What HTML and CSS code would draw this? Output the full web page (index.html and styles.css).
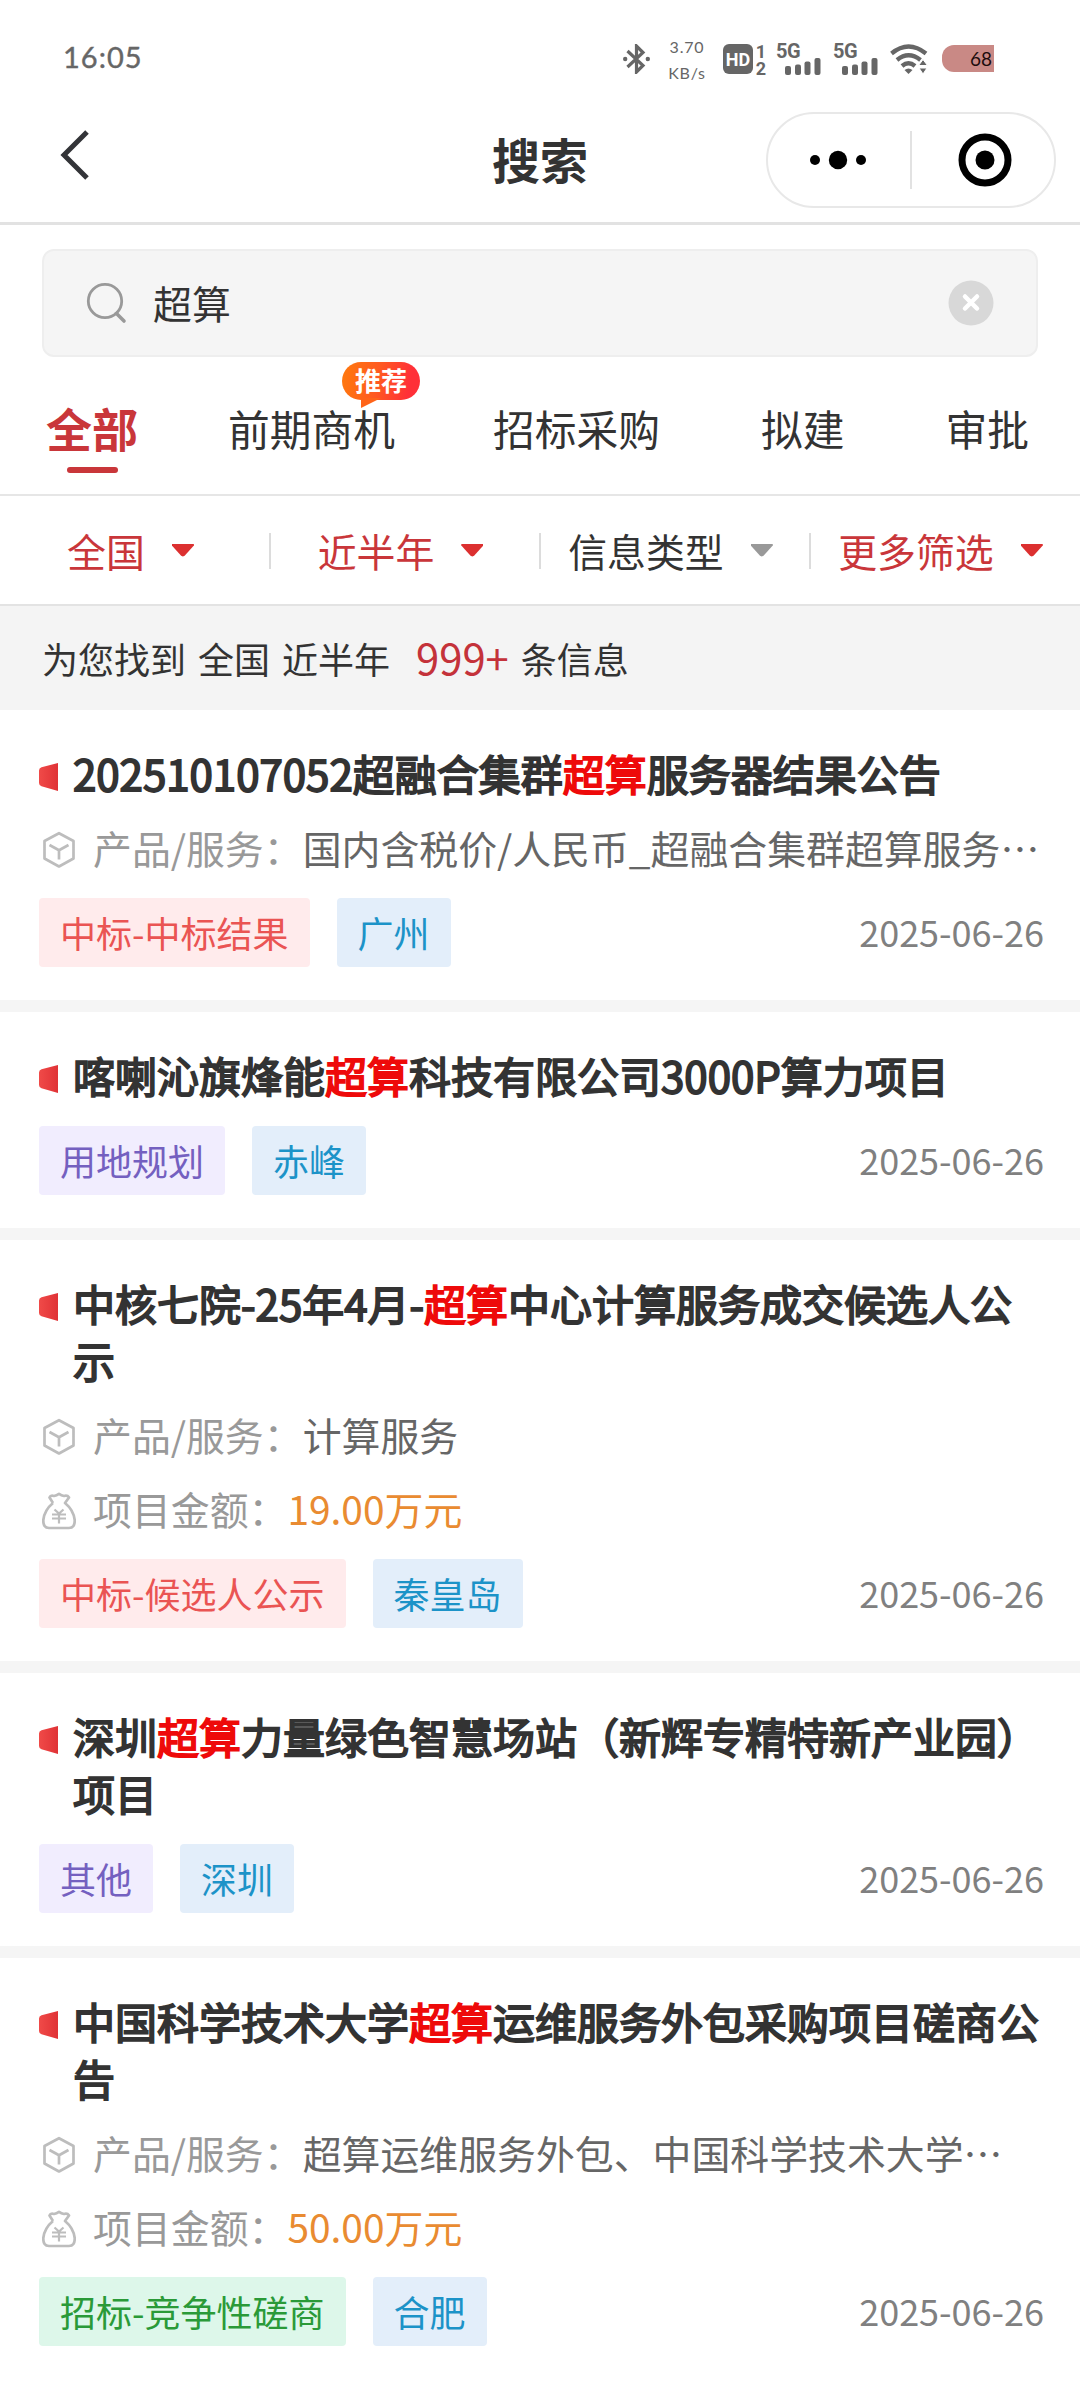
FILE: index.html
```html
<!DOCTYPE html>
<html lang="zh-CN">
<head>
    <meta charset="UTF-8">
    <meta name="viewport" content="width=device-width, initial-scale=1.0">
    <title>搜索</title>
    <link rel="stylesheet" href="styles.css">
</head>
<body>
    <!-- shared icons -->
    <svg class="sprite" width="0" height="0">
        <defs>
            <linearGradient id="markFill" x1="0" y1="0" x2="1" y2="0">
                <stop offset="0" stop-color="#f04a48"/>
                <stop offset="1" stop-color="#e03236"/>
            </linearGradient>
        </defs>
        <symbol id="mark" viewBox="0 0 19 28">
            <path d="M0 7.5Q0 5 2.5 4.300L19 0V28L2.500 23.200Q0 22.500 0 20Z" fill="url(#markFill)"/>
        </symbol>
        <symbol id="cube" viewBox="0 0 34 38">
            <path d="M17 2.200 31.500 10V27.500L17 35.500 2.500 27.500V10Z M7.500 14 17 19.300 26.500 14 M17 19.300V28.500" fill="none" stroke="#bdbdbd" stroke-width="2.700" stroke-linejoin="round"/>
        </symbol>
        <symbol id="bag" viewBox="0 0 34 38">
            <path d="M11 11 7.500 5.500Q8.500 3 12 4Q14.500 3.500 17 1.800Q19.500 3.500 22 4Q25.500 3 27 5.500L23 11Q31.500 18 32.700 28Q33 36 27 36H7Q1 36 1.300 28Q2.500 18 11 11" fill="none" stroke="#bdbdbd" stroke-width="2.700" stroke-linejoin="round"/>
            <path d="M12.500 17.500 17 21.500 21.500 17.500M10 22.500H24M10 26.500H24M17 21.500V31.500" fill="none" stroke="#bdbdbd" stroke-width="2.200"/>
        </symbol>
        <symbol id="bars" viewBox="0 0 36 17">
            <rect x="0" y="8" width="6" height="9" rx="2"/>
            <rect x="10" y="6.500" width="6" height="10.500" rx="2"/>
            <rect x="19.500" y="3.500" width="6" height="13.500" rx="2"/>
            <rect x="29.500" y="0" width="6" height="17" rx="2"/>
        </symbol>
    </svg>

    <div class="status-bar">
        <div class="time">16:05</div>
        <div class="status-icons">
            <svg class="bluetooth" width="27" height="30" viewBox="0 0 27 30">
                <path d="M4.500 7 20 21.500 13.500 28V2L20 8.500 4.500 23" fill="none" stroke="#666" stroke-width="3.200"/>
                <circle cx="2.200" cy="15" r="2.200" fill="#666"/>
                <circle cx="24.800" cy="15" r="2.200" fill="#666"/>
            </svg>
            <div class="speed"><span>3.70</span><span>KB/s</span></div>
            <div class="hd">HD</div>
            <div class="sim"><span>1</span><span>2</span></div>
            <div class="signal"><span>5G</span><svg width="36" height="17" fill="#666"><use href="#bars"/></svg></div>
            <div class="signal"><span>5G</span><svg width="36" height="17" fill="#666"><use href="#bars"/></svg></div>
            <svg class="wifi" width="38" height="30" viewBox="0 0 38 30">
                <path d="M1.500 9.500Q18.500-4.500 36 9.500M7 16Q18.500 6.500 30.500 16M12 22Q18.500 16.500 25 22" fill="none" stroke="#666" stroke-width="4.300"/>
                <path d="M14.500 26Q18.500 23 22.500 26L18.500 30Z" fill="#666"/>
                <path d="M33 15.500 37.500 21.500H28.500ZM33 30 37 24H29Z" fill="#666" stroke="#fff" stroke-width="1"/>
            </svg>
            <div class="battery">68</div>
        </div>
    </div>

    <div class="nav-bar">
        <svg class="back" width="30" height="52" viewBox="0 0 30 52">
            <path d="M27 3 4 26 27 49" fill="none" stroke="#333438" stroke-width="5"/>
        </svg>
        <div class="nav-title">搜索</div>
        <div class="capsule">
            <svg width="56" height="20" viewBox="0 0 56 20">
                <circle cx="5" cy="10" r="5"/>
                <circle cx="28" cy="10" r="9.200"/>
                <circle cx="51" cy="10" r="5"/>
            </svg>
            <i></i>
            <svg width="54" height="54" viewBox="0 0 54 54">
                <circle cx="27" cy="27" r="23" fill="none" stroke="#000" stroke-width="7"/>
                <circle cx="27" cy="27" r="9.500"/>
            </svg>
        </div>
    </div>

    <div class="search-box">
        <svg width="42" height="42" viewBox="0 0 42 42">
            <circle cx="19" cy="19" r="16.700" fill="none" stroke="#999" stroke-width="2.800"/>
            <path d="M30.500 31.500 38 39" stroke="#999" stroke-width="3.600" stroke-linecap="round"/>
        </svg>
        <span class="keyword">超算</span>
        <svg width="46" height="46" viewBox="0 0 46 46">
            <circle cx="23" cy="23" r="22.500" fill="#d8d8d8"/>
            <path d="M17 16.500 29 28.500M29 16.500 17 28.500" stroke="#fff" stroke-width="4.500" stroke-linecap="round"/>
        </svg>
    </div>

    <div class="tabs">
        <div class="tab active">全部</div>
        <div class="tab hot">前期商机
            <div class="hot-badge">推荐</div>
        </div>
        <div class="tab">招标采购</div>
        <div class="tab">拟建</div>
        <div class="tab">审批</div>
    </div>

    <div class="filters">
        <div class="filter on">全国</div>
        <div class="filter on">近半年</div>
        <div class="filter">信息类型</div>
        <div class="filter on">更多筛选</div>
    </div>

    <div class="summary">
        <span>为您找到</span>
        <span>全国</span>
        <span>近半年</span>
        <span class="count">999+</span>
        <span>条信息</span>
    </div>

    <div class="list">
        <div class="card">
            <div class="card-title">
                <svg class="mark" width="19" height="28"><use href="#mark"/></svg>
                <div>202510107052超融合集群<em>超算</em>服务器结果公告</div>
            </div>
            <div class="row">
                <svg width="34" height="38"><use href="#cube"/></svg>
                <span class="label">产品/服务：</span><span class="value">国内含税价/人民币_超融合集群超算服务…</span>
            </div>
            <div class="card-foot">
                <span class="tag red">中标-中标结果</span>
                <span class="tag blue">广州</span>
                <span class="date">2025-06-26</span>
            </div>
        </div>

        <div class="card">
            <div class="card-title">
                <svg class="mark" width="19" height="28"><use href="#mark"/></svg>
                <div>喀喇沁旗烽能<em>超算</em>科技有限公司3000P算力项目</div>
            </div>
            <div class="card-foot">
                <span class="tag purple">用地规划</span>
                <span class="tag blue">赤峰</span>
                <span class="date">2025-06-26</span>
            </div>
        </div>

        <div class="card">
            <div class="card-title">
                <svg class="mark" width="19" height="28"><use href="#mark"/></svg>
                <div>中核七院-25年4月-<em>超算</em>中心计算服务成交候选人公示</div>
            </div>
            <div class="row">
                <svg width="34" height="38"><use href="#cube"/></svg>
                <span class="label">产品/服务：</span><span class="value">计算服务</span>
            </div>
            <div class="row">
                <svg width="34" height="38"><use href="#bag"/></svg>
                <span class="label">项目金额：</span><span class="value money">19.00万元</span>
            </div>
            <div class="card-foot">
                <span class="tag red">中标-候选人公示</span>
                <span class="tag blue">秦皇岛</span>
                <span class="date">2025-06-26</span>
            </div>
        </div>

        <div class="card">
            <div class="card-title">
                <svg class="mark" width="19" height="28"><use href="#mark"/></svg>
                <div>深圳<em>超算</em>力量绿色智慧场站（新辉专精特新产业园）项目</div>
            </div>
            <div class="card-foot">
                <span class="tag purple">其他</span>
                <span class="tag blue">深圳</span>
                <span class="date">2025-06-26</span>
            </div>
        </div>

        <div class="card">
            <div class="card-title">
                <svg class="mark" width="19" height="28"><use href="#mark"/></svg>
                <div>中国科学技术大学<em>超算</em>运维服务外包采购项目磋商公告</div>
            </div>
            <div class="row">
                <svg width="34" height="38"><use href="#cube"/></svg>
                <span class="label">产品/服务：</span><span class="value">超算运维服务外包、中国科学技术大学…</span>
            </div>
            <div class="row">
                <svg width="34" height="38"><use href="#bag"/></svg>
                <span class="label">项目金额：</span><span class="value money">50.00万元</span>
            </div>
            <div class="card-foot">
                <span class="tag green">招标-竞争性磋商</span>
                <span class="tag blue">合肥</span>
                <span class="date">2025-06-26</span>
            </div>
        </div>
    </div>
</body>
</html>
```

FILE: styles.css
```css
* {
    box-sizing: border-box;
}

body {
    margin: 0;
    width: 1080px;
    height: 2388px;
    overflow: hidden;
    background-color: #fff;
    color: #333;
    font-family: "Noto Sans CJK SC", sans-serif;
    font-size: 38.88px;
}

svg {
    display: block;
    flex-shrink: 0;
}

.sprite {
    position: absolute;
}

/* status bar */
.status-bar {
    display: flex;
    justify-content: space-between;
    height: 100px;
    padding: 40px 86px 0 63px;
    color: #666;
    font-family: Lato, sans-serif;
}

.time {
    font-size: 29px;
    line-height: 33px;
    letter-spacing: 1px;
    -webkit-text-stroke: 0.4px #666;
}

.status-icons {
    display: flex;
    align-items: flex-start;
}

.bluetooth {
    margin: 4px 17px 0 0;
}

.speed {
    display: flex;
    flex-direction: column;
    align-items: center;
    width: 40px;
    margin: -6px 16px 0 0;
    font-size: 16px;
    line-height: 26px;
    letter-spacing: 0.8px;
}

.hd {
    width: 30px;
    height: 30px;
    margin-top: 4px;
    border-radius: 6px;
    background-color: #666;
    color: #fff;
    font: bold 18px/31px Roboto, sans-serif;
    text-align: center;
}

.sim {
    display: flex;
    flex-direction: column;
    width: 12px;
    margin: 3px 9px 0 2px;
    font: bold 18px/17px Roboto, sans-serif;
    text-align: center;
}

.signal {
    width: 45px;
    margin: 4px 12px 0 0;
}

.signal span {
    display: block;
    height: 14px;
    font: bold 20px/15px Roboto, sans-serif;
    letter-spacing: -0.5px;
}

.signal svg {
    margin-left: 9px;
}

.wifi {
    margin: 4px 14px 0 0;
}

.battery {
    width: 52px;
    height: 27px;
    margin-top: 5px;
    padding-right: 2px;
    border-radius: 12px 0 0 12px;
    background-color: #c98985;
    color: #1c0d0d;
    font-size: 19px;
    line-height: 27px;
    text-align: right;
}

/* nav bar */
.nav-bar {
    display: grid;
    grid-template-columns: 290px 1fr 290px;
    align-items: start;
    height: 125px;
    padding: 12px 24px 0 60px;
    border-bottom: 3px solid #e2e2e2;
}

.back {
    margin-top: 17px;
}

.nav-title {
    padding-right: 36px;
    font-size: 48px;
    font-weight: bold;
    line-height: 92px;
    text-align: center;
}

.capsule {
    display: flex;
    align-items: center;
    height: 96px;
    padding-left: 42px;
    border: 2px solid #e8e8e8;
    border-radius: 48px;
}

.capsule i {
    width: 2px;
    height: 58px;
    margin: 0 46px 0 44px;
    background-color: #e2e2e2;
}

/* search */
.search-box {
    display: flex;
    align-items: center;
    width: 996px;
    height: 108px;
    margin: 24px 42px 0;
    padding: 0 42px;
    border: 2px solid #eee;
    border-radius: 12px;
    background-color: #f5f5f5;
}

.keyword {
    flex: 1;
    margin: -2px 0 0 25px;
}

/* tabs */
.tabs {
    display: flex;
    height: 139px;
    padding-left: 46px;
    border-bottom: 2px solid #e6e6e6;
    font-size: 41.76px;
    line-height: 60px;
}

.tab {
    position: relative;
    margin: 41px 101px 0 0;
    white-space: nowrap;
}

.tab.active {
    margin: 40px 90px 0 0;
    color: #c9363a;
    font-size: 46px;
    font-weight: bold;
}

.tab.active::after {
    content: "";
    display: block;
    width: 51px;
    height: 6px;
    margin: 10px auto 0;
    border-radius: 3px;
    background-color: #c9363a;
}

.tab.hot {
    margin-right: 98px;
}

.hot-badge {
    position: absolute;
    left: 114px;
    top: -36px;
    width: 78px;
    height: 38px;
    border-radius: 19px;
    background: linear-gradient(100deg, #ff7a0d, #ff5a20 45%, #ff3038 85%);
    color: #fff;
    font-size: 26px;
    font-weight: bold;
    line-height: 36px;
    text-align: center;
}

.hot-badge::after {
    content: "";
    position: absolute;
    left: 19px;
    top: 36px;
    border-top: 10px solid #ff6419;
    border-right: 20px solid transparent;
}

/* filters */
.filters {
    display: grid;
    grid-template-columns: repeat(4, 1fr);
    height: 110px;
    border-bottom: 2px solid #e3e3e3;
}

.filter {
    display: flex;
    align-items: center;
    justify-content: center;
    position: relative;
    padding: 0 9px 0 0;
}

.filter.on {
    color: #c9363a;
}

.filter::after {
    content: "";
    width: 22px;
    height: 13px;
    margin: 0 0 0 27px;
    background-color: #999;
    clip-path: polygon(0 0, 100% 0, 100% 15%, 58% 94%, 50% 100%, 42% 94%, 0 15%);
}

.filter.on::after {
    background-color: #dc3030;
}

.filter + .filter::before {
    content: "";
    position: absolute;
    left: -1px;
    top: 37px;
    width: 2px;
    height: 36px;
    background-color: #dcdcdc;
}

/* summary */
.summary {
    display: flex;
    align-items: center;
    gap: 12px;
    height: 104px;
    padding: 0 42px;
    background-color: #f4f4f4;
    font-size: 36px;
}

.summary .count {
    margin: -2px 0 0 14px;
    color: #c4323a;
    font-size: 41.76px;
}

/* result cards */
.list {
    background-color: #f5f5f5;
}

.card {
    display: flex;
    flex-direction: column;
    margin-bottom: 12px;
    padding: 34px 36px 33px 39px;
    background-color: #fff;
}

.card-title {
    display: flex;
    margin-bottom: 12px;
    font-size: 42px;
    line-height: 57px;
    -webkit-text-stroke: 1.8px currentColor;
}

.card-title em {
    color: #ee0a0a;
    font-style: normal;
}

.mark {
    margin: 19px 15px 0 0;
}

.row {
    display: flex;
    align-items: center;
    height: 74px;
    padding-left: 3px;
    line-height: 58px;
    white-space: nowrap;
}

.label {
    margin: -6px 0 0 17px;
    color: #999;
}

.value {
    margin-top: -6px;
    color: #666;
}

.money {
    color: #e98b31;
}

.card-foot {
    display: flex;
    align-items: center;
    height: 69px;
    margin-top: 11px;
    font-size: 36px;
}

.tag {
    height: 69px;
    margin-right: 27px;
    padding: 0 21px;
    border-radius: 4px;
    line-height: 68px;
}

.tag.red {
    background-color: #ffebec;
    color: #ea5453;
}

.tag.blue {
    background-color: #e3eefa;
    color: #1c93c8;
}

.tag.purple {
    background-color: #f1edfe;
    color: #7460c0;
}

.tag.green {
    background-color: #ddf7ea;
    color: #2a9a38;
}

.date {
    margin: -3px 0 0 auto;
    color: #808080;
}
```
